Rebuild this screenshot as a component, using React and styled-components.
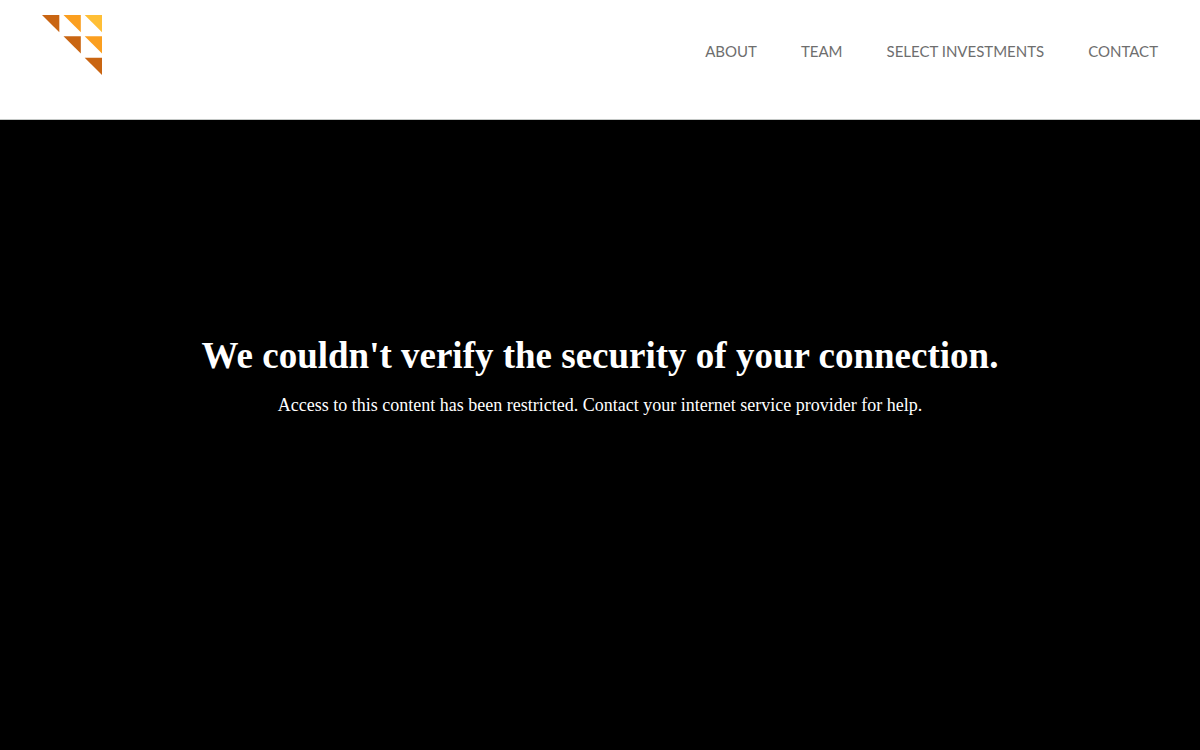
import React from 'react';
import styled, { createGlobalStyle } from 'styled-components';

const GlobalStyle = createGlobalStyle`
  body {
    margin: 0;
    background: #000;
  }
`;

const Page = styled.div`
  display: flex;
  flex-direction: column;
  min-height: 100vh;
`;

const Header = styled.header`
  display: flex;
  justify-content: space-between;
  align-items: flex-start;
  padding: 15px 42px 44px;
  background: #fff;
  border-bottom: 1px solid #c4c8c6;
`;

const LogoLink = styled.a`
  display: block;

  svg {
    display: block;
  }
`;

const Nav = styled.nav`
  display: flex;
  gap: 44px;
  padding-top: 26px;
`;

const NavLink = styled.a`
  color: #6e6e6e;
  font-family: Lato, 'Liberation Sans', sans-serif;
  font-size: 15px;
  line-height: 20px;
  text-decoration: none;
  text-transform: uppercase;
`;

const Message = styled.main`
  flex: 1;
  display: flex;
  flex-direction: column;
  align-items: center;
  padding: 212px 24px 0;
  background: #000;
  color: #fff;
  font-family: 'Liberation Serif', serif;
  text-align: center;
`;

const Title = styled.h1`
  margin: 0 0 14px;
  font-size: 37px;
  line-height: 48px;
`;

const Text = styled.p`
  margin: 0;
  font-size: 18px;
  line-height: 22px;
`;

const links = [
  { label: 'About', href: '#about' },
  { label: 'Team', href: '#team' },
  { label: 'Select Investments', href: '#investments' },
  { label: 'Contact', href: '#contact' },
];

function Logo() {
  return (
    <svg width="60" height="60" viewBox="0 0 60 60" aria-hidden="true">
      <path d="M0 0H17.3V17.3Z" fill="#c96512" />
      <path d="M21.5 0H38.8V17.3Z" fill="#fb9f1f" />
      <path d="M42.7 0H60V17.3Z" fill="#ffbf36" />
      <path d="M21.5 21.3H38.8V38.6Z" fill="#c96512" />
      <path d="M42.7 21.3H60V38.6Z" fill="#fb9f1f" />
      <path d="M42.7 42.7H60V60Z" fill="#c96512" />
    </svg>
  );
}

function App() {
  return (
    <Page>
      <GlobalStyle />
      <Header>
        <LogoLink href="#home" aria-label="Home">
          <Logo />
        </LogoLink>
        <Nav>
          {links.map(link => (
            <NavLink key={link.href} href={link.href}>
              {link.label}
            </NavLink>
          ))}
        </Nav>
      </Header>

      <Message>
        <Title>We couldn't verify the security of your connection.</Title>
        <Text>
          Access to this content has been restricted. Contact your internet
          service provider for help.
        </Text>
      </Message>
    </Page>
  );
}

export default App;
